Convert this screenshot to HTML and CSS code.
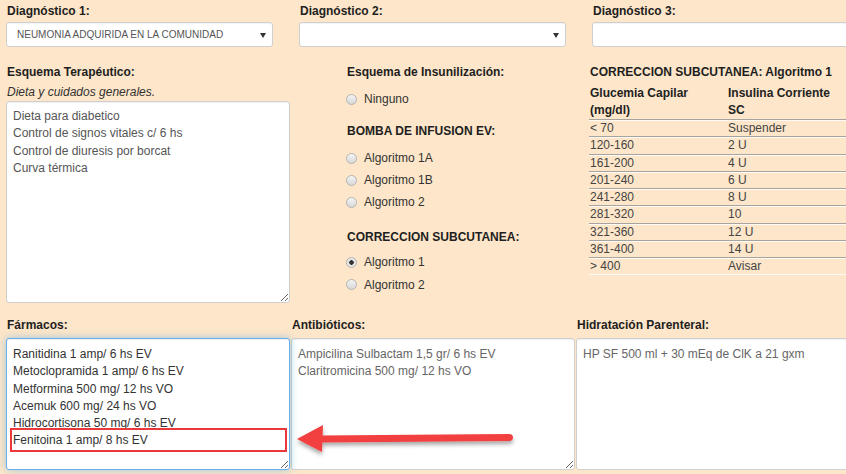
FILE: index.html
```html
<!DOCTYPE html>
<html lang="es">
<head>
<meta charset="utf-8">
<title>Indicaciones</title>
<link rel="stylesheet" href="styles.css">
</head>
<body>
<div class="page">
  <div class="top">
    <div class="diag">
      <label class="lbl">Diagnóstico 1:</label>
      <div class="sel"><select><option>NEUMONIA ADQUIRIDA EN LA COMUNIDAD</option></select></div>
    </div>
    <div class="diag">
      <label class="lbl">Diagnóstico 2:</label>
      <div class="sel"><select><option></option></select></div>
    </div>
    <div class="diag">
      <label class="lbl">Diagnóstico 3:</label>
      <div class="sel nosel"><select><option></option></select></div>
    </div>
  </div>

  <div class="mid">
    <div class="col-ter">
      <label class="lbl">Esquema Terapéutico:</label>
      <div class="hint">Dieta y cuidados generales.</div>
      <textarea class="ta ta-ter">Dieta para diabetico
Control de signos vitales c/ 6 hs
Control de diuresis por borcat
Curva térmica</textarea>
    </div>
    <div class="col-ins">
      <div class="lbl">Esquema de Insunilización:</div>
      <div class="group g1">
        <label class="rad"><input type="radio" name="ins"> Ninguno</label>
      </div>
      <div class="lbl h2">BOMBA DE INFUSION EV:</div>
      <div class="group g2">
        <label class="rad"><input type="radio" name="ins"> Algoritmo 1A</label>
        <label class="rad"><input type="radio" name="ins"> Algoritmo 1B</label>
        <label class="rad"><input type="radio" name="ins"> Algoritmo 2</label>
      </div>
      <div class="lbl h3">CORRECCION SUBCUTANEA:</div>
      <div class="group g3">
        <label class="rad"><input type="radio" name="ins" checked> Algoritmo 1</label>
        <label class="rad"><input type="radio" name="ins"> Algoritmo 2</label>
      </div>
    </div>
    <div class="col-tab">
      <div class="lbl">CORRECCION SUBCUTANEA: Algoritmo 1</div>
      <table class="tab">
        <thead>
          <tr><th>Glucemia Capilar<br>(mg/dl)</th><th>Insulina Corriente<br>SC</th></tr>
        </thead>
        <tbody>
          <tr><td>&lt; 70</td><td>Suspender</td></tr>
          <tr><td>120-160</td><td>2 U</td></tr>
          <tr><td>161-200</td><td>4 U</td></tr>
          <tr><td>201-240</td><td>6 U</td></tr>
          <tr><td>241-280</td><td>8 U</td></tr>
          <tr><td>281-320</td><td>10</td></tr>
          <tr><td>321-360</td><td>12 U</td></tr>
          <tr><td>361-400</td><td>14 U</td></tr>
          <tr><td>&gt; 400</td><td>Avisar</td></tr>
        </tbody>
      </table>
    </div>
  </div>

  <div class="bot">
    <div class="bcol">
      <label class="lbl">Fármacos:</label>
      <textarea class="ta ta-bot focus">Ranitidina 1 amp/ 6 hs EV
Metoclopramida 1 amp/ 6 hs EV
Metformina 500 mg/ 12 hs VO
Acemuk 600 mg/ 24 hs VO
Hidrocortisona 50 mg/ 6 hs EV
Fenitoina 1 amp/ 8 hs EV</textarea>
    </div>
    <div class="bcol">
      <label class="lbl">Antibióticos:</label>
      <textarea class="ta ta-bot light">Ampicilina Sulbactam 1,5 gr/ 6 hs EV
Claritromicina 500 mg/ 12 hs VO</textarea>
    </div>
    <div class="bcol">
      <label class="lbl">Hidratación Parenteral:</label>
      <textarea class="ta ta-bot light">HP SF 500 ml + 30 mEq de ClK a 21 gxm</textarea>
    </div>
  </div>

  <div class="redbox"></div>
  <svg class="arrow" width="230" height="44" viewBox="0 0 230 44">
    <defs>
      <filter id="sh" x="-10%" y="-40%" width="120%" height="200%">
        <feDropShadow dx="0" dy="3" stdDeviation="2" flood-color="#000" flood-opacity="0.35"/>
      </filter>
    </defs>
    <g filter="url(#sh)">
      <path d="M26 15.5 L214 14 Q218 14 218 17.5 Q218 21 214 21 L26 22.5 Z" fill="#f23f3f"/>
      <path d="M2 19 L28 5 L27 32 Z" fill="#f23f3f"/>
    </g>
  </svg>
</div>
</body>
</html>
```

FILE: styles.css
```css
html, body {
  margin: 0;
  padding: 0;
}
body {
  background: #fde6c9;
  font-family: "Liberation Sans", Arial, sans-serif;
  font-size: 12px;
  color: #222;
  overflow: hidden;
  width: 846px;
  height: 474px;
}
.page {
  position: relative;
  height: 474px;
}
.lbl {
  display: block;
  font-weight: bold;
  line-height: 14px;
  font-size: 12px;
  color: #1e1e1e;
  white-space: nowrap;
}

/* top row */
.top {
  display: flex;
  padding: 4px 0 0 6px;
}
.diag {
  flex: none;
  width: 293px;
}
.diag .lbl {
  padding-left: 1px;
  margin-bottom: 4px;
}
.sel {
  position: relative;
  width: 267px;
  height: 25px;
}
.sel select {
  appearance: none;
  -webkit-appearance: none;
  width: 100%;
  height: 25px;
  box-sizing: border-box;
  border: 1px solid #cfcfcf;
  border-radius: 3px;
  background: #fff;
  font-family: "Liberation Sans", Arial, sans-serif;
  font-size: 10px;
  color: #555;
  padding: 0 0 0 10px;
  margin: 0;
  box-shadow: inset 0 1px 1px rgba(0,0,0,0.05);
}
.sel::after {
  content: "";
  position: absolute;
  right: 7px;
  top: 11px;
  border-left: 3px solid transparent;
  border-right: 3px solid transparent;
  border-top: 5px solid #333;
}
.sel.nosel::after {
  display: none;
}

/* middle row */
.mid {
  display: flex;
  padding-left: 6px;
  margin-top: 18px;
}
.col-ter {
  flex: none;
  width: 284px;
  margin-right: 56px;
}
.col-ter .lbl {
  padding-left: 1px;
}
.hint {
  font-style: italic;
  line-height: 14px;
  margin-top: 6px;
  padding-left: 1px;
  color: #333;
}
.ta {
  display: block;
  box-sizing: border-box;
  width: 284px;
  border: 1px solid #cfcfcf;
  border-radius: 3px;
  background: #fff;
  font-family: "Liberation Sans", Arial, sans-serif;
  font-size: 12px;
  line-height: 17.3px;
  color: #555;
  padding: 6px 6px;
  margin: 0;
  resize: both;
  overflow: hidden;
  box-shadow: inset 0 1px 1px rgba(0,0,0,0.06);
}
.ta-ter {
  margin-top: 2px;
  height: 202px;
}

.col-ins {
  flex: none;
  width: 243px;
}
.col-ins > .lbl {
  padding-left: 1px;
}
.group {
  display: flex;
  flex-direction: column;
}
.g1 { margin-top: 9px; }
.h2 { margin-top: 14px; }
.g2 { margin-top: 9px; }
.h3 { margin-top: 17px; }
.g3 { margin-top: 7px; }
.rad {
  display: flex;
  align-items: center;
  height: 22px;
  font-size: 12px;
  color: #333;
}
.g3 .rad + .rad {
  height: 23px;
}
.rad input {
  appearance: none;
  -webkit-appearance: none;
  width: 11px;
  height: 11px;
  margin: 0 7px 0 0;
  border: 1px solid #b4b4b4;
  border-radius: 50%;
  background: linear-gradient(#f4f4f4, #d8d8d8);
  box-sizing: border-box;
  position: relative;
}
.rad input:checked {
  background: radial-gradient(circle, #333 0 2px, #e6e6e6 2.5px);
}

.col-tab {
  flex: 1;
  min-width: 0;
}
.col-tab > .lbl {
  padding-left: 1px;
}
.tab {
  border-collapse: collapse;
  width: 262px;
  margin-top: 5px;
  font-size: 12px;
}
.tab th {
  text-align: left;
  font-weight: bold;
  line-height: 17px;
  padding: 1px 0 0 1px;
  vertical-align: top;
  color: #222;
}
.tab th:first-child { width: 137px; }
.tab td {
  line-height: 16.25px;
  height: 16.25px;
  padding: 0 0 0 1px;
  color: #444;
  border-top: 1px solid #a7a39f;
  box-shadow: inset 0 1px 0 #fffaf4;
}
.tab tbody tr:last-child td {
  border-bottom: 1px solid #fffaf4;
}

/* bottom row */
.bot {
  display: flex;
  gap: 1px;
  padding-left: 6px;
  margin-top: 15px;
}
.bcol {
  flex: none;
  width: 284px;
}
.bcol .lbl {
  padding-left: 1px;
  margin-bottom: 6px;
}
.ta-bot {
  height: 132px;
  padding-top: 7px;
}
.ta-bot.focus {
  border-color: #66afe9;
  color: #333;
  box-shadow: inset 0 1px 1px rgba(0,0,0,0.06), 0 0 8px rgba(102,175,233,0.6);
  position: relative;
  z-index: 1;
}
.ta-bot.light {
  color: #666;
}

/* annotation overlays */
.redbox {
  position: absolute;
  left: 10px;
  top: 428px;
  width: 277px;
  height: 24px;
  box-sizing: border-box;
  border: 2px solid #e8383a;
  z-index: 2;
}
.arrow {
  position: absolute;
  left: 295px;
  top: 420px;
  z-index: 2;
}
```
